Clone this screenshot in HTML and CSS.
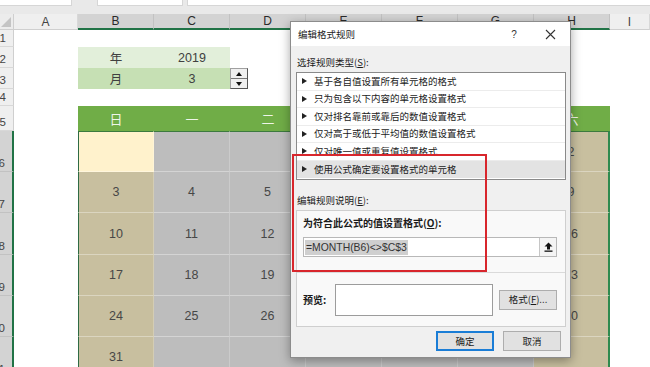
FILE: index.html
```html
<!DOCTYPE html>
<html lang="zh-CN">
<head>
<meta charset="utf-8">
<title>编辑格式规则</title>
<link rel="stylesheet" href="styles.css">
</head>
<body>
<div class="app">
  <div class="topbar">
    <div class="fbox fbox-name"></div>
    <div class="fbox fbox-mid"></div>
    <div class="fbox fbox-formula"></div>
  </div>

  <div class="sheet">
    <div class="corner"><span class="corner-tri"></span></div>
    <div class="ch">A</div>
    <div class="ch sel">B</div><div class="ch sel">C</div><div class="ch sel">D</div><div class="ch sel">E</div><div class="ch sel">F</div><div class="ch sel">G</div><div class="ch sel">H</div>
    <div class="ch">I</div>

    <div class="rh">1</div>
    <div class="c"></div><div class="c"></div><div class="c"></div><div class="c"></div><div class="c"></div><div class="c"></div><div class="c"></div><div class="c"></div><div class="c"></div>

    <div class="rh">2</div>
    <div class="c"></div><div class="c y1">年</div><div class="c y1 num">2019</div><div class="c"></div><div class="c"></div><div class="c"></div><div class="c"></div><div class="c"></div><div class="c"></div>

    <div class="rh">3</div>
    <div class="c"></div><div class="c y2">月</div><div class="c y2 num">3</div><div class="c"></div><div class="c"></div><div class="c"></div><div class="c"></div><div class="c"></div><div class="c"></div>

    <div class="rh">4</div>
    <div class="c"></div><div class="c"></div><div class="c"></div><div class="c"></div><div class="c"></div><div class="c"></div><div class="c"></div><div class="c"></div><div class="c"></div>

    <div class="rh">5</div>
    <div class="c"></div><div class="c wk">日</div><div class="c wk">一</div><div class="c wk">二</div><div class="c wk"></div><div class="c wk"></div><div class="c wk"></div><div class="c wk">六</div><div class="c"></div>

    <div class="rh sel">6</div>
    <div class="c"></div><div class="cal act fl ft"></div><div class="cal ft"></div><div class="cal ft"></div><div class="cal ft"></div><div class="cal ft"></div><div class="cal ft"></div><div class="cal we fr ft">2</div><div class="c"></div>

    <div class="rh sel">7</div>
    <div class="c"></div><div class="cal we fl">3</div><div class="cal">4</div><div class="cal">5</div><div class="cal"></div><div class="cal"></div><div class="cal"></div><div class="cal we fr">9</div><div class="c"></div>

    <div class="rh sel">8</div>
    <div class="c"></div><div class="cal we fl">10</div><div class="cal">11</div><div class="cal">12</div><div class="cal"></div><div class="cal"></div><div class="cal"></div><div class="cal we fr">16</div><div class="c"></div>

    <div class="rh sel">9</div>
    <div class="c"></div><div class="cal we fl">17</div><div class="cal">18</div><div class="cal">19</div><div class="cal"></div><div class="cal"></div><div class="cal"></div><div class="cal we fr">23</div><div class="c"></div>

    <div class="rh sel">10</div>
    <div class="c"></div><div class="cal we fl">24</div><div class="cal">25</div><div class="cal">26</div><div class="cal"></div><div class="cal"></div><div class="cal"></div><div class="cal we fr">30</div><div class="c"></div>

    <div class="rh sel">11</div>
    <div class="c"></div><div class="cal we fl">31</div><div class="cal"></div><div class="cal"></div><div class="cal"></div><div class="cal"></div><div class="cal"></div><div class="cal we fr"></div><div class="c"></div>
  </div>

  <div class="spin">
    <div class="spin-btn"><span class="tri-up"></span></div>
    <div class="spin-btn"><span class="tri-down"></span></div>
  </div>

  <div class="dialog">
    <div class="dtitle">
      <span class="dtitle-text">编辑格式规则</span>
      <span class="help">?</span>
      <span class="close">
        <svg width="11" height="11" viewBox="0 0 11 11"><path d="M1 1 L10 10 M10 1 L1 10" stroke="#333" stroke-width="1.1" fill="none"/></svg>
      </span>
    </div>
    <div class="dbody">
      <div class="lbl lbl-top">选择规则类型(<u>S</u>):</div>
      <div class="list">
        <div class="item"><span class="arr"></span>基于各自值设置所有单元格的格式</div>
        <div class="item"><span class="arr"></span>只为包含以下内容的单元格设置格式</div>
        <div class="item"><span class="arr"></span>仅对排名靠前或靠后的数值设置格式</div>
        <div class="item"><span class="arr"></span>仅对高于或低于平均值的数值设置格式</div>
        <div class="item"><span class="arr"></span>仅对唯一值或重复值设置格式</div>
        <div class="item item-sel"><span class="arr"></span>使用公式确定要设置格式的单元格</div>
      </div>
      <div class="lbl lbl-mid">编辑规则说明(<u>E</u>):</div>
      <div class="panel">
        <div class="panel-top">
          <div class="lbl-bold">为符合此公式的值设置格式(<u>O</u>):</div>
          <div class="formula">
            <span class="ftext">=MONTH(B6)&lt;&gt;$C$3</span>
            <span class="fbtn">
              <svg width="9" height="10" viewBox="0 0 9 10"><path d="M4.5 0.5 L8.5 4.5 L6 4.5 L6 7.5 L3 7.5 L3 4.5 L0.5 4.5 Z" fill="#111"/><rect x="0.5" y="8.5" width="8" height="1.3" fill="#111"/></svg>
            </span>
          </div>
        </div>
        <div class="preview-row">
          <span class="lbl-bold">预览:</span>
          <div class="preview"></div>
          <div class="btn btn-fmt">格式(<u>F</u>)...</div>
        </div>
      </div>
      <div class="btn-row">
        <div class="btn btn-ok">确定</div>
        <div class="btn">取消</div>
      </div>
    </div>
  </div>

  <div class="redbox"></div>
</div>
</body>
</html>
```

FILE: styles.css
```css
* { box-sizing: border-box; margin: 0; padding: 0; }
html, body { width: 650px; height: 367px; overflow: hidden; background: #fff; }
body { font-family: "Noto Sans CJK SC", "Noto Sans", sans-serif; }

.app { position: relative; width: 650px; height: 367px; overflow: hidden; background: #fff; }

/* formula bar remnant */
.topbar { height: 14px; background: #e9e9e9; display: flex; align-items: flex-start; }
.fbox { height: 6px; background: #fff; border: 1px solid #d6d6d6; border-top: none; }
.fbox-name { width: 72px; border-left: none; }
.fbox-mid { width: 86px; margin-left: 25px; }
.fbox-formula { flex: 1; margin-left: 4px; border-right: none; }

/* sheet grid */
.sheet {
  display: grid;
  grid-template-columns: 14px 64px repeat(7, 76px) 40px;
  grid-template-rows: 16px 17px 21px 21px 17px 25px 41px 41px 42px 41px 41px 41px;
}

.corner { background: #ececec; border-right: 1px solid #cfcfcf; border-bottom: 1px solid #cfcfcf; position: relative; }
.corner-tri {
  position: absolute; right: 2px; bottom: 2px; width: 0; height: 0;
  border-left: 10px solid transparent; border-bottom: 10px solid #c4c4c4;
}

.ch {
  background: #efefef; color: #444; font: 12px "Liberation Sans", sans-serif;
  display: flex; align-items: center; justify-content: center;
  border-right: 1px solid #d8d8d8; border-bottom: 1px solid #cfcfcf;
}
.ch.sel { background: #d3d3d3; color: #2a2a2a; border-right-color: #c2c2c2; border-bottom: 2px solid #217346; }

.rh {
  background: #efefef; color: #444; font: 11.5px "Liberation Sans", sans-serif;
  display: flex; align-items: flex-end; justify-content: flex-end;
  padding: 0 7px 2px 0; overflow: hidden; white-space: nowrap;
  border-right: 1px solid #cfcfcf; border-bottom: 1px solid #d8d8d8;
}
.rh.sel { background: #d3d3d3; border-right: 2px solid #217346; border-bottom-color: #c2c2c2; }

.c { background: #fff; display: flex; align-items: center; justify-content: center; color: #404040; font-size: 12.5px; }
.c.num { font-family: "Liberation Sans", sans-serif; }
.y1 { background: #e2efda; }
.y2 { background: #c6e0b4; }
.wk { background: #70ad47; color: #eef5e8; font-size: 13px; }

.cal {
  background: #bdbdbd; color: #474747;
  font: 12.5px "Liberation Sans", sans-serif;
  display: flex; align-items: center; justify-content: center;
  border-right: 1px solid rgba(255,255,255,0.22);
  border-bottom: 1px solid rgba(255,255,255,0.35);
}
.cal.we { background: #c8bf9f; }
.cal.act { background: #fff2cc; }
.cal.fl { border-left: 1px solid #2e6b44; }
.cal.fr { border-right: 2px solid #2f8a4f; }
.cal.ft { border-top: 1px solid #3c7a3e; }

/* spin control */
.spin {
  position: absolute; left: 230px; top: 68px; width: 18px; height: 21px;
  display: flex; flex-direction: column; background: #f0f0f0;
  border: 1px solid #a0a0a0; border-right-color: #555; border-bottom-color: #555;
}
.spin-btn { flex: 1; display: flex; align-items: center; justify-content: center; }
.spin-btn + .spin-btn { border-top: 1px solid #777; }
.tri-up { width: 0; height: 0; border-left: 3px solid transparent; border-right: 3px solid transparent; border-bottom: 4px solid #111; }
.tri-down { width: 0; height: 0; border-left: 3px solid transparent; border-right: 3px solid transparent; border-top: 4px solid #111; }

/* dialog */
.dialog {
  position: absolute; left: 290px; top: 21px; width: 281px; height: 337px;
  background: #f0f0f0; border: 1px solid #8c8c8c;
  box-shadow: 0 3px 10px rgba(0,0,0,0.35);
  font-size: 9.5px; color: #1b1b1b; line-height: 13px;
}
.dtitle { height: 24px; background: #fff; display: flex; align-items: center; padding-left: 7px; }
.dtitle-text { flex: 1; font-size: 9.5px; }
.help { width: 36px; text-align: center; font: 10px "Liberation Sans", sans-serif; color: #333; }
.close { width: 36px; display: flex; justify-content: center; margin-right: 2px; }

.dbody { padding: 0 4px 0 5px; }
.lbl-top { margin-top: 10px; padding-left: 1px; }
.list {
  margin-top: 3px; height: 108px; background: #fff;
  border: 1px solid #8a8a8a; padding-top: 0;
}
.item {
  height: 17.5px; display: flex; align-items: center; padding-left: 5px;
  border-bottom: 1px solid #ececec; white-space: nowrap;
}
.item-sel { background: #e3e3e3; border-bottom: none; }
.arr {
  width: 0; height: 0; margin-right: 7px;
  border-top: 3.5px solid transparent; border-bottom: 3.5px solid transparent;
  border-left: 5px solid #222;
}
.lbl-mid { margin-top: 14px; padding-left: 1px; }
.panel {
  margin-top: 3px; height: 117px; border: 1px solid #cfcfcf; background: #f9f9f9;
  display: flex; flex-direction: column;
}
.panel-top { height: 62px; padding: 5px 8px 0 6px; border-bottom: 1px solid #dadada; }
.lbl-bold { font-weight: bold; font-size: 10px; }
.formula {
  margin-top: 8px; height: 20px; background: #fff; border: 1px solid #b8b8b8;
  display: flex; align-items: center; justify-content: space-between; padding: 0 0 0 1px;
}
.ftext {
  background: #cfcfcf; color: #333; font: 10.4px "Liberation Sans", sans-serif;
  line-height: 15px; padding: 0 1px;
}
.fbtn {
  width: 17px; height: 18px; border-left: 1px solid #c6c6c6; background: #f4f4f4;
  display: flex; align-items: center; justify-content: center;
}
.preview-row { flex: 1; display: flex; align-items: center; padding: 0 8px 0 6px; }
.preview { width: 158px; height: 32px; background: #fff; border: 1px solid #9c9c9c; margin-left: 9px; }
.btn {
  width: 58px; height: 20px; background: #e1e1e1; border: 1px solid #adadad;
  display: flex; align-items: center; justify-content: center; white-space: nowrap;
}
.btn-fmt { margin-left: auto; }
.btn-row { display: flex; justify-content: flex-end; gap: 9px; margin-top: 4px; padding-right: 5px; }
.btn-ok { border: 2px solid #1a7dd6; width: 58px; }

/* annotation */
.redbox {
  position: absolute; left: 292px; top: 154px; width: 195px; height: 118px;
  border: 2px solid #d8262c;
}
```
